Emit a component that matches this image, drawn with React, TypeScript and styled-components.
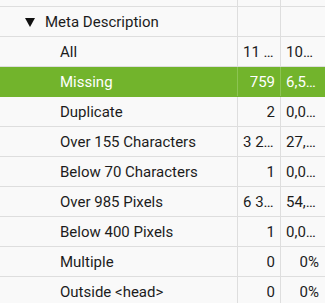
import React from "react";
import styled, { createGlobalStyle } from "styled-components";

const Global = createGlobalStyle`
  html, body { margin: 0; padding: 0; background: #f9f9f9; }
  body { font-family: Roboto, "Liberation Sans", sans-serif; }
`;

const Table = styled.div`
  width: 325px;
  display: flex;
  flex-direction: column;
  overflow: hidden;
`;

const Row = styled.div<{ $selected?: boolean; $short?: boolean }>`
  display: grid;
  grid-template-columns: 238px 43px 44px;
  height: ${(p) => (p.$short ? "7px" : "30px")};
  box-sizing: border-box;
  border-bottom: 1px solid ${(p) => (p.$selected ? "#72b42c" : "#dedede")};
  background: ${(p) => (p.$selected ? "#72b42c" : "#f9f9f9")};
  color: ${(p) => (p.$selected ? "#ffffff" : "#1c1c1c")};
  font-size: 15px;
`;

const NameCell = styled.div<{ $indent: number; $selected?: boolean }>`
  display: flex;
  align-items: center;
  padding-left: ${(p) => p.$indent}px;
  border-right: 1px solid ${(p) => (p.$selected ? "#8cc453" : "#dedede")};
  white-space: nowrap;
  overflow: hidden;
`;

const NumCell = styled.div<{ $selected?: boolean; $last?: boolean }>`
  display: flex;
  align-items: center;
  justify-content: flex-end;
  padding: 0 ${(p) => (p.$last ? "6px" : "5px")} 0 5px;
  border-right: ${(p) =>
    p.$last ? "none" : `1px solid ${p.$selected ? "#8cc453" : "#dedede"}`};
  min-width: 0;
`;

const NumText = styled.span`
  display: block;
  white-space: nowrap;
  overflow: hidden;
  text-overflow: ellipsis;
  text-align: right;
  max-width: 100%;
`;

const Caret = styled.span`
  display: inline-block;
  width: 0;
  height: 0;
  border-left: 5px solid transparent;
  border-right: 5px solid transparent;
  border-top: 9px solid #111;
  margin-right: 10px;
  margin-top: 1px;
`;

type Item = { name: string; count: string; pct: string; selected?: boolean };

const items: Item[] = [
  { name: "All", count: "11 652", pct: "100%" },
  { name: "Missing", count: "759", pct: "6,51%", selected: true },
  { name: "Duplicate", count: "2", pct: "0,02%" },
  { name: "Over 155 Characters", count: "3 217", pct: "27,61%" },
  { name: "Below 70 Characters", count: "1", pct: "0,01%" },
  { name: "Over 985 Pixels", count: "6 387", pct: "54,81%" },
  { name: "Below 400 Pixels", count: "1", pct: "0,01%" },
  { name: "Multiple", count: "0", pct: "0%" },
  { name: "Outside <head>", count: "0", pct: "0%" },
];

export default function App() {
  return (
    <>
      <Global />
      <Table>
        <Row $short>
          <NameCell $indent={0} />
          <NumCell />
          <NumCell $last />
        </Row>
        <Row>
          <NameCell $indent={25}>
            <Caret />
            Meta Description
          </NameCell>
          <NumCell />
          <NumCell $last />
        </Row>
        {items.map((it) => (
          <Row key={it.name} $selected={it.selected}>
            <NameCell $indent={60} $selected={it.selected}>
              {it.name}
            </NameCell>
            <NumCell $selected={it.selected}>
              <NumText>{it.count}</NumText>
            </NumCell>
            <NumCell $selected={it.selected} $last>
              <NumText>{it.pct}</NumText>
            </NumCell>
          </Row>
        ))}
      </Table>
    </>
  );
}
